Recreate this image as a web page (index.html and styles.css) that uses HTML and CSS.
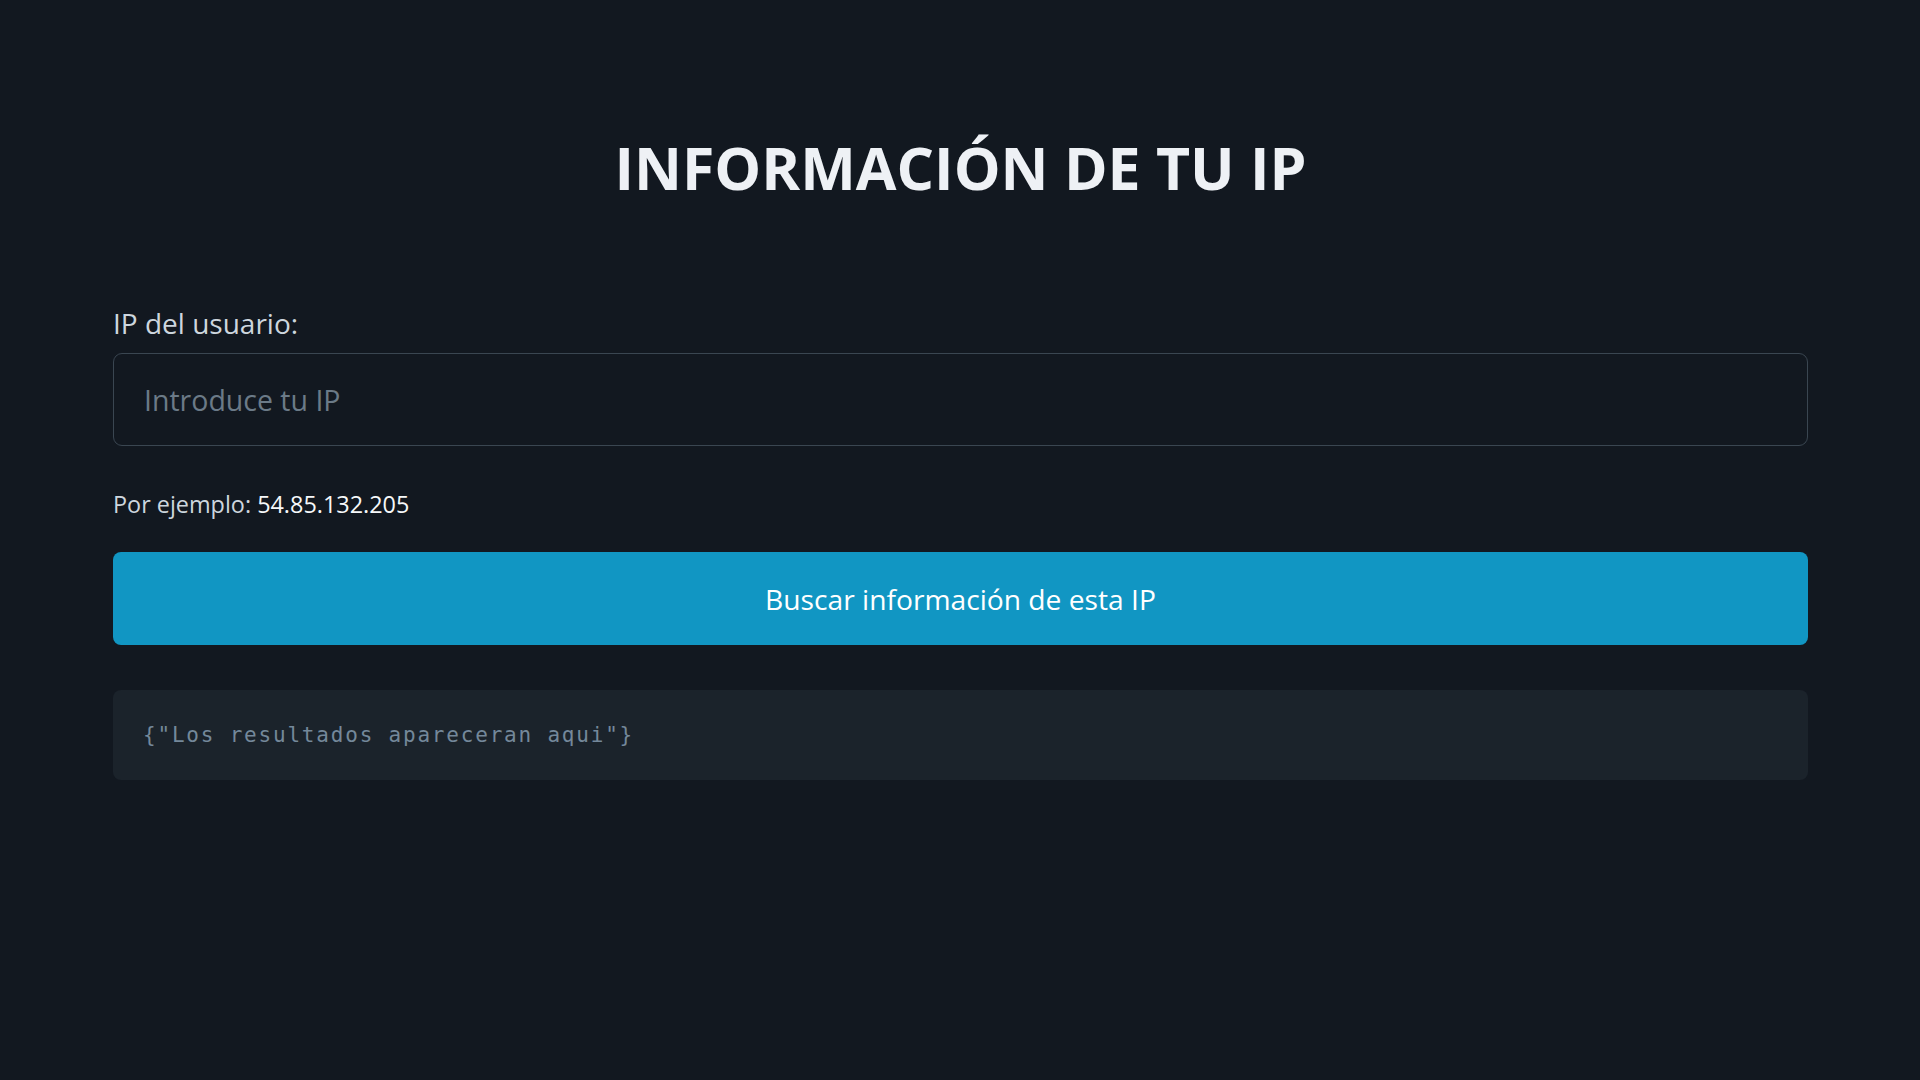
FILE: index.html
```html
<!DOCTYPE html>
<html lang="es">
<head>
    <meta charset="UTF-8">
    <meta name="viewport" content="width=device-width, initial-scale=1.0">
    <title>Información de tu IP</title>
    <link rel="stylesheet" href="styles.css">
</head>
<body>

    <main class="ip-container">
        <h1 class="ip-title">INFORMACIÓN DE TU IP</h1>

        <label for="ip" class="ip-label">IP del usuario:</label>
        <input type="text" id="ip" class="ip-input" placeholder="Introduce tu IP">

        <p class="ip-example">Por ejemplo: <span class="ip-example-value">54.85.132.205</span></p>

        <button type="button" class="ip-button">Buscar información de esta IP</button>

        <pre class="ip-result">{"Los resultados apareceran aqui"}</pre>
    </main>

</body>
</html>
```

FILE: styles.css
```css
body {
    margin: 0;
    background-color: #121820;
    color: #cdd6de;
    font-family: "Open Sans", "Noto Sans", Arial, sans-serif;
}
.ip-container {
    display: flex;
    flex-direction: column;
    padding: 131px 112px 0 113px;
}
.ip-title {
    margin: 0 0 101px;
    font-size: 59px;
    line-height: 72px;
    font-weight: 700;
    text-align: center;
    color: #eef1f5;
}
.ip-label {
    font-size: 28px;
    line-height: 39px;
    margin-bottom: 10px;
    color: #cdd6de;
}
.ip-input {
    height: 93px;
    box-sizing: border-box;
    padding: 0 30px;
    border: 1px solid #3a4651;
    border-radius: 9px;
    background-color: #121820;
    color: #dee4ea;
    font-family: inherit;
    font-size: 28.5px;
    outline: none;
}
.ip-input::placeholder {
    color: #6b7a87;
}
.ip-example {
    margin: 40px 0 30px;
    font-size: 23.4px;
    line-height: 36px;
    color: #cdd6de;
}
.ip-example-value {
    color: #f6f8fa;
}
.ip-button {
    height: 93px;
    border: none;
    border-radius: 8px;
    background-color: #1196c3;
    color: #ffffff;
    font-family: inherit;
    font-size: 28.2px;
    cursor: pointer;
}
.ip-result {
    margin: 45px 0 0;
    height: 90px;
    box-sizing: border-box;
    padding: 0 30px;
    display: flex;
    align-items: center;
    border-radius: 8px;
    background-color: #1b232b;
    color: #74889a;
    font-family: "DejaVu Sans Mono", "Liberation Mono", monospace;
    font-size: 21px;
    letter-spacing: 1.8px;
}
```
